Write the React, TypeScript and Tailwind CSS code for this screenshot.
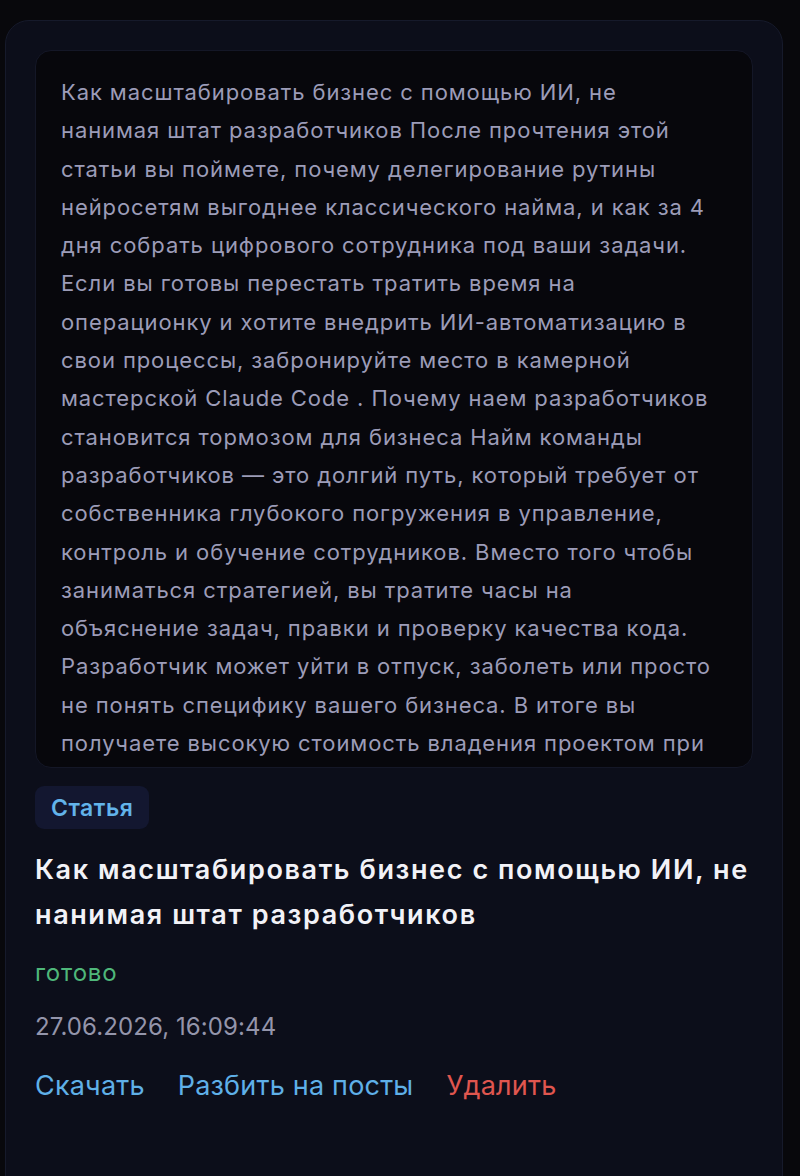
const lines = [
  'Как масштабировать бизнес с помощью ИИ, не',
  'нанимая штат разработчиков После прочтения этой',
  'статьи вы поймете, почему делегирование рутины',
  'нейросетям выгоднее классического найма, и как за 4',
  'дня собрать цифрового сотрудника под ваши задачи.',
  'Если вы готовы перестать тратить время на',
  'операционку и хотите внедрить ИИ-автоматизацию в',
  'свои процессы, забронируйте место в камерной',
  'мастерской Claude Code . Почему наем разработчиков',
  'становится тормозом для бизнеса Найм команды',
  'разработчиков — это долгий путь, который требует от',
  'собственника глубокого погружения в управление,',
  'контроль и обучение сотрудников. Вместо того чтобы',
  'заниматься стратегией, вы тратите часы на',
  'объяснение задач, правки и проверку качества кода.',
  'Разработчик может уйти в отпуск, заболеть или просто',
  'не понять специфику вашего бизнеса. В итоге вы',
  'получаете высокую стоимость владения проектом при',
  'этом скорость разработки остается низкой, а результат',
  'непредсказуемым.',
]

export default function App() {
  return (
    <div className="min-h-[1176px] overflow-hidden bg-[#08080c] pl-[5px] pr-[17px] pt-[20px] font-['Inter','Noto_Sans',sans-serif]">
      <div className="h-[1200px] rounded-[24px] border border-[#161a2b] bg-[#0c0e1a] px-[29px] pt-[29px]">
        {/* article body preview, clipped */}
        <div className="h-[718px] overflow-hidden rounded-[16px] border border-[#141727] bg-[#07070c] pl-[25px] pr-[12px] pt-[22px]">
          <p className="text-[22px] leading-[38.3px] tracking-[0.9px] text-[#9c9cb8]">
            {lines.map((l, i) => (
              <span key={i} className="block whitespace-nowrap">
                {l}
              </span>
            ))}
          </p>
        </div>

        <div className="mt-[18px] inline-flex h-[43px] items-center rounded-[9px] bg-[#131730] px-[16px]">
          <span className="text-[23px] leading-[28px] font-semibold tracking-[0.5px] text-[#62b3ea]">Статья</span>
        </div>

        <h2 className="mt-[18px] text-[27px] font-semibold leading-[45px] tracking-[1.6px] text-[#f2f2f7]">
          Как масштабировать бизнес с помощью ИИ, не нанимая штат разработчиков
        </h2>

        <div className="mt-[21px] text-[24px] leading-[30px] tracking-[0.8px] text-[#4fb77a]">готово</div>
        <div className="mt-[24px] text-[24px] leading-[30px] tracking-[0.1px] text-[#9495ab]">27.06.2026, 16:09:44</div>

        <div className="mt-[26px] flex gap-[33px] text-[27px] leading-[36px] tracking-[0.2px]">
          <button className="text-[#5fb0e8]">Скачать</button>
          <button className="text-[#5fb0e8]">Разбить на посты</button>
          <button className="text-[#e0564f]">Удалить</button>
        </div>
      </div>
    </div>
  )
}
